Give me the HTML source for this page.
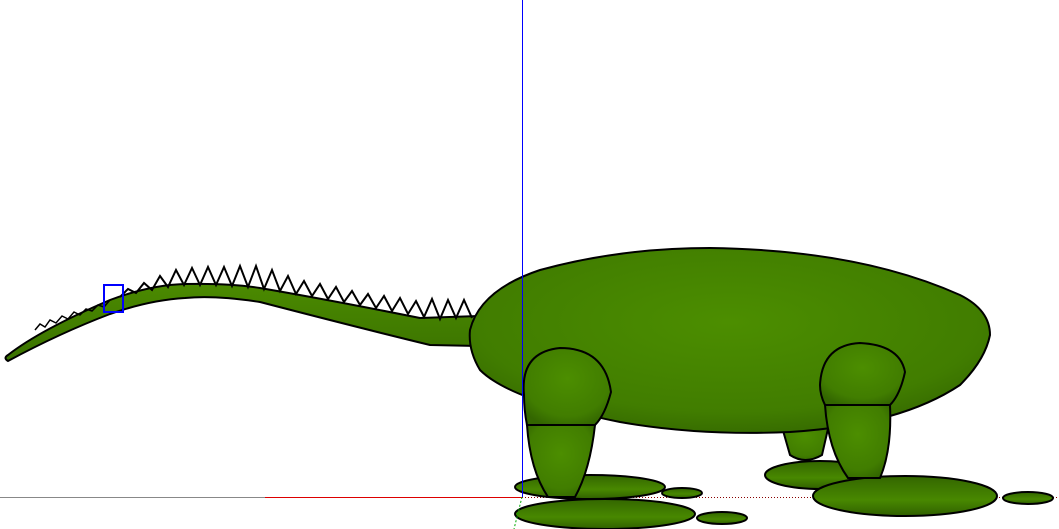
<!DOCTYPE html>
<html><head><meta charset="utf-8"><style>html,body{margin:0;padding:0;background:#fff;width:1059px;height:529px;overflow:hidden}</style></head>
<body>
<svg width="1059" height="529" viewBox="0 0 1059 529" xmlns="http://www.w3.org/2000/svg">
<defs>
<radialGradient id="g" cx="50%" cy="40%" r="65%"><stop offset="0" stop-color="#4c8e00"/><stop offset="0.75" stop-color="#417d00"/><stop offset="1" stop-color="#336600"/></radialGradient>
<linearGradient id="t" x1="0" y1="0" x2="0" y2="1"><stop offset="0" stop-color="#4b8a00"/><stop offset="1" stop-color="#3a7200"/></linearGradient>
<linearGradient id="f" x1="0" y1="0" x2="0" y2="1"><stop offset="0" stop-color="#336600"/><stop offset="0.6" stop-color="#488800"/><stop offset="1" stop-color="#306000"/></linearGradient>
</defs>
<line x1="0" y1="497.5" x2="265" y2="497.5" stroke="#888" stroke-width="1"/>
<line x1="265" y1="497.5" x2="522" y2="497.5" stroke="#d00" stroke-width="1"/>
<line x1="522" y1="497.5" x2="1059" y2="497.5" stroke="#800" stroke-width="1" stroke-dasharray="1,2"/>
<path d="M780,420 L830,420 L822,455 Q805,465 790,455 Z" fill="url(#g)" stroke="#000" stroke-width="2"/>
<ellipse cx="820" cy="475" rx="55" ry="14" fill="url(#f)" stroke="#000" stroke-width="2"/>
<path d="M8,355 Q40,330 110,300 Q150,285 185,284 Q230,283 260,288 Q330,300 420,318 L478,316 L478,346 L430,345 Q360,328 260,302 Q215,295 185,298 Q150,300 110,314 Q60,333 8,361 Q3,358 8,355 Z" fill="url(#t)" stroke="#000" stroke-width="2"/>
<polyline fill="none" stroke="#000" stroke-width="2" points="120,297 128,289 136,293 144,283 152,290 160,276 168,287 176,270 184,285 192,268 200,285 208,267 216,285 224,267 232,286 240,266 248,287 256,266 264,289 272,270 280,291 288,276 296,294 304,281 312,296 320,284 328,299 336,287 344,302 352,291 360,305 368,294 376,308 384,296 392,311 400,298 408,314 416,301 424,317 432,299 440,319 448,300 456,318 464,300 472,318"/>
<polyline fill="none" stroke="#000" stroke-width="1.5" points="35,330 40,324 45,327 50,320 56,323 62,316 68,319 74,312 80,315 86,309 92,311 98,305 104,307 110,300"/>
<rect x="104" y="285" width="19" height="27" fill="none" stroke="#00f" stroke-width="2"/>
<path d="M470,330 Q480,290 540,270 Q620,248 710,248 Q860,250 960,295 Q990,310 990,335 Q985,360 960,385 Q900,425 790,432 Q700,436 620,422 Q510,400 480,370 Q468,350 470,330 Z" fill="url(#g)" stroke="#000" stroke-width="2"/>
<ellipse cx="590" cy="487" rx="75" ry="12" fill="url(#f)" stroke="#000" stroke-width="2"/>
<ellipse cx="682" cy="493" rx="20" ry="5" fill="url(#f)" stroke="#000" stroke-width="2"/>
<ellipse cx="605" cy="514" rx="90" ry="15" fill="url(#f)" stroke="#000" stroke-width="2"/>
<ellipse cx="722" cy="518" rx="25" ry="6" fill="url(#f)" stroke="#000" stroke-width="2"/>
<path d="M527,425 L595,425 Q590,470 575,497 L548,497 Q530,470 527,425 Z" fill="url(#g)" stroke="#000" stroke-width="2"/>
<path d="M524,395 Q520,352 560,348 Q605,348 611,392 Q605,415 595,425 L527,425 Q524,410 524,395 Z" fill="url(#g)" stroke="#000" stroke-width="2"/>
<ellipse cx="905" cy="496" rx="92" ry="20" fill="url(#f)" stroke="#000" stroke-width="2"/>
<ellipse cx="1028" cy="498" rx="25" ry="6" fill="url(#f)" stroke="#000" stroke-width="2"/>
<path d="M825,405 L890,405 Q892,450 880,478 L848,478 Q828,450 825,405 Z" fill="url(#g)" stroke="#000" stroke-width="2"/>
<path d="M820,385 Q822,345 860,343 Q900,345 905,372 Q900,395 890,405 L825,405 Q820,395 820,385 Z" fill="url(#g)" stroke="#000" stroke-width="2"/>
<line x1="522.5" y1="0" x2="522.5" y2="497" stroke="#00f" stroke-width="1"/>
<line x1="522" y1="497" x2="514" y2="529" stroke="#0a0" stroke-width="1" stroke-dasharray="2,2"/>
</svg>
</body></html>
